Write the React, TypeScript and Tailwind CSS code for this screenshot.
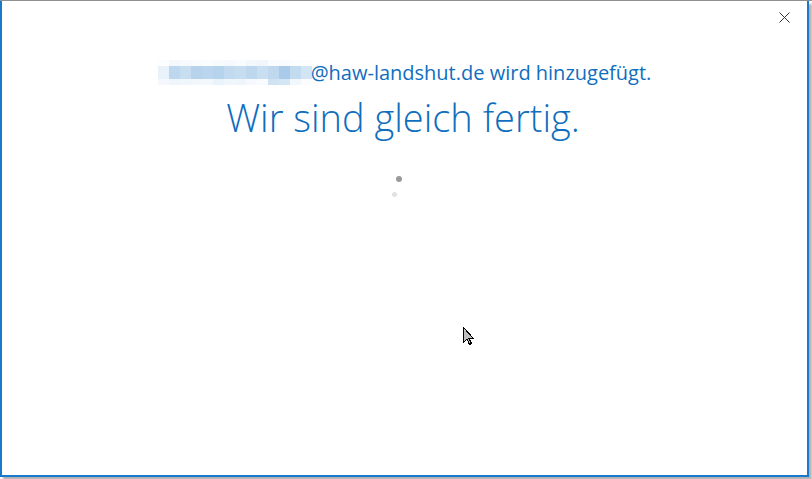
const topRow = [
  "bg-[#fbfdfe]", "bg-[#f4f8fc]", "bg-[#f7fafd]", "bg-[#f9fbfe]", "bg-[#fafcfe]", "bg-[#f8fbfd]",
  "bg-[#f6f9fd]", "bg-[#f9fbfe]", "bg-[#f3f8fc]", "bg-[#f0f6fb]", "bg-[#fafcfe]", "bg-[#f9fbfe]",
  "bg-[#fbfdfe]", "bg-[#fcfdff]",
];
const midRow = [
  "bg-[#e9f2fa]", "bg-[#bcd7ee]", "bg-[#c7def1]", "bg-[#b7d3ec]", "bg-[#bad5ed]", "bg-[#b6d3ec]",
  "bg-[#c1daef]", "bg-[#c6ddf0]", "bg-[#bdd7ee]", "bg-[#c8dff1]", "bg-[#bfd8ee]", "bg-[#a9cbe9]",
  "bg-[#c2dbef]", "bg-[#d2e5f4]",
];
const bottomRow = [
  "bg-[#f4f8fc]", "bg-[#eef5fb]", "bg-[#f1f6fc]", "bg-[#f2f7fc]", "bg-[#f3f8fc]", "bg-[#eaf2fa]",
  "bg-[#f0f6fb]", "bg-[#eef5fb]", "bg-[#f6f9fd]", "bg-[#f9fbfe]", "bg-[#d0e3f3]", "bg-[#d4e6f4]",
  "bg-[#f2f7fc]", "bg-[#fafcfe]",
];

// pixelated placeholder for the hidden account name
function MaskedName() {
  const rows = [
    { cells: topRow, h: "h-[6px]" },
    { cells: midRow, h: "h-[13px]" },
    { cells: bottomRow, h: "h-[6px]" },
  ];
  return (
    <div className="flex flex-col">
      {rows.map((r, i) => (
        <div key={i} className={`flex ${r.h}`}>
          {r.cells.map((c, j) => (
            <div key={j} className={`w-[11px] h-full ${c}`} />
          ))}
        </div>
      ))}
    </div>
  );
}

function Cursor() {
  return (
    <svg width="12" height="19" viewBox="0 0 12 19" shapeRendering="crispEdges">
      <path
        d="M0.5 0.5 L0.5 15.5 L4 12 L6.5 17.5 L8.5 16.5 L6 11.5 L10.5 11.5 Z"
        fill="#c0c0c0"
        stroke="#000"
        strokeWidth="1"
      />
    </svg>
  );
}

export default function App() {
  return (
    <div className="w-[812px] h-[479px] bg-white flex flex-col overflow-hidden" style={{ fontFamily: "'Open Sans', 'Noto Sans', sans-serif" }}>
      <div className="h-px bg-[#8f8f8f] shrink-0" />
      <div className="flex-1 flex">
        <div className="w-[809px] h-[476px] border-l-2 border-r-2 border-b-2 border-[#1979ca] bg-white relative flex flex-col shadow-[3px_3px_2px_rgba(0,0,0,0.3)]">
          <button className="absolute right-[17px] top-[10px] w-[12px] h-[12px] flex items-center justify-center">
            <svg width="11" height="11" viewBox="0 0 11 11">
              <path d="M0.5 0.5 L10.5 10.5 M10.5 0.5 L0.5 10.5" stroke="#333" strokeWidth="1" />
            </svg>
          </button>

          <div className="flex items-center justify-center pt-[58px]">
            <MaskedName />
            <span className="text-[20px] leading-[27px] text-[#106ebe] -ml-px">
              @haw-landshut.de wird hinzugefügt.
            </span>
          </div>

          <div className="text-center text-[38px] font-light leading-[48px] text-[#106ebe] mt-[7px] pr-[3px]">
            Wir sind gleich fertig.
          </div>

          {/* loading dots */}
          <div className="relative h-[40px] mt-[32px]">
            <div className="absolute left-[394px] top-[3px] w-[6px] h-[6px] rounded-full bg-[#9a9a9a]" />
            <div className="absolute left-[390px] top-[19px] w-[5px] h-[5px] rounded-full bg-[#e2e2e2]" />
          </div>

          <div className="absolute left-[461px] top-[326px]">
            <Cursor />
          </div>
        </div>
      </div>
    </div>
  );
}
